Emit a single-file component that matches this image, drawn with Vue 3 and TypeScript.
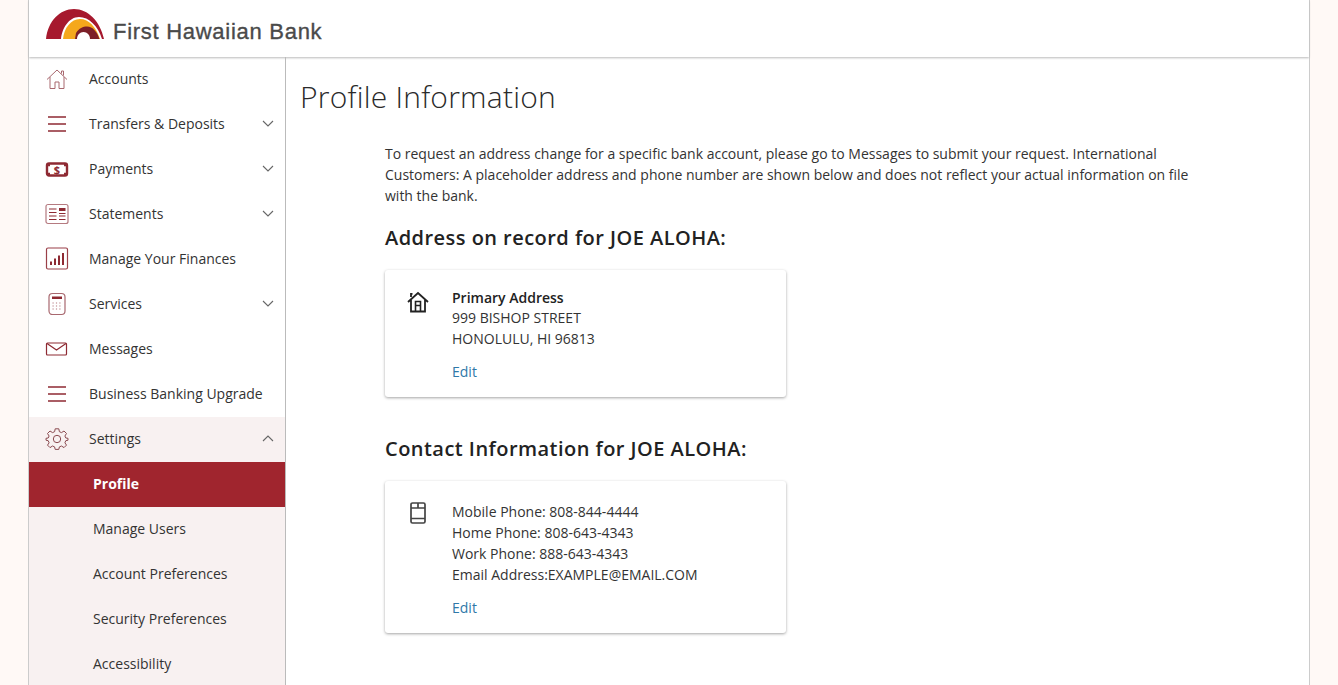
<script setup lang="ts">
interface NavItem {
  label: string
  icon: string
  chevron?: boolean
}

const navItems: NavItem[] = [
  { label: 'Accounts', icon: 'home' },
  { label: 'Transfers & Deposits', icon: 'menu', chevron: true },
  { label: 'Payments', icon: 'cash', chevron: true },
  { label: 'Statements', icon: 'news', chevron: true },
  { label: 'Manage Your Finances', icon: 'chart' },
  { label: 'Services', icon: 'calc', chevron: true },
  { label: 'Messages', icon: 'mail' },
  { label: 'Business Banking Upgrade', icon: 'menu' }
]

const subItems = ['Profile', 'Manage Users', 'Account Preferences', 'Security Preferences', 'Accessibility']
const phones = ['Mobile Phone: 808-844-4444', 'Home Phone: 808-643-4343', 'Work Phone: 888-643-4343', 'Email Address:EXAMPLE@EMAIL.COM']
</script>

<template>
  <div class="page">
    <div class="shell">
      <header class="header">
        <svg class="logo" width="60" height="31" viewBox="0 0 60 31">
          <path d="M0 30C2 12 14 0 28 0C42 0 54 12 58 30H56C52 17 43 8 33 8C23 8 16 19 15 30Z" fill="#a6192e" />
          <path d="M17 30C18 19 25 10 34 10C43 10 50 18 54 30H28V30Z" fill="#f5a81c" />
          <path d="M30 24C33 19 37 17.500 41 17.500C47 17.500 51 23 53.500 30H29Z" fill="#7c1f27" />
          <path d="M31 30C31 26 34 23 37.500 23C41 23 44 26 44 30Z" fill="#fff" />
        </svg>
        <span class="brand">First Hawaiian Bank</span>
      </header>
      <div class="body">
        <nav class="nav">
          <a v-for="item in navItems" :key="item.label" class="nav-row">
            <span class="nav-icon">
              <svg width="24" height="24" viewBox="0 0 24 24" fill="none" stroke="#8e2a33" stroke-width="1.2">
                <template v-if="item.icon === 'home'">
                  <path d="M2 12.500L12 3L22 12.500M5 10V21.500H10V15H14V21.500H19V10M16.500 6.500V4H18.500V8.500" stroke="#a8686f" stroke-width="1" />
                </template>
                <template v-else-if="item.icon === 'menu'">
                  <path d="M3 5H21M3 12H21M3 19H21" stroke-width="1.4" />
                </template>
                <template v-else-if="item.icon === 'cash'">
                  <rect x="2" y="6.500" width="20" height="12" rx="2" stroke-width="2.4" />
                  <path d="M2 8h3M19 8h3M2 17h3M19 17h3" stroke-width="2.4" />
                  <text x="12" y="16.500" font-size="11" font-weight="700" fill="#8e2a33" stroke="none" text-anchor="middle" font-family="Open Sans, sans-serif">$</text>
                </template>
                <template v-else-if="item.icon === 'news'">
                  <rect x="1" y="2.500" width="22" height="19" rx="2" stroke="#b57a80" />
                  <path d="M4 7H11.500M4 10.500H11.500M4 14H11.500M4 17.500H11.500M14 14H20.500M14 17.500H20.500M14 11.500H20.500" stroke-width="1.100" />
                  <rect x="14" y="6" width="6.500" height="3" fill="#8e2a33" stroke="none" />
                </template>
                <template v-else-if="item.icon === 'chart'">
                  <rect x="1.500" y="1" width="21" height="21" rx="1.500" stroke="#9a3f48" />
                  <path d="M6 18V14.500M10 18V11.500M14 18V8.500M18 18V6" stroke-width="2" />
                </template>
                <template v-else-if="item.icon === 'calc'">
                  <rect x="4" y="1.500" width="16" height="21" rx="3.500" stroke="#a8686f" />
                  <rect x="7" y="4.500" width="10" height="2.500" fill="#8e2a33" stroke="none" />
                  <path d="M7.500 11H16.500M7.500 14H16.500M7.500 17H16.500" stroke-width="1.200" stroke-dasharray="1.200 2.200" stroke="#b57a80" />
                </template>
                <template v-else-if="item.icon === 'mail'">
                  <rect x="1.500" y="6" width="20" height="12" rx="1" />
                  <path d="M2 6.500L11.500 13L21 6.500" />
                </template>
              </svg>
            </span>
            <span class="nav-label">{{ item.label }}</span>
            <svg v-if="item.chevron" class="chev" width="12" height="7" viewBox="0 0 12 7" fill="none" stroke="#666" stroke-width="1.100">
              <path d="M1 1L6 6L11 1" />
            </svg>
          </a>
          <div class="group">
            <a class="nav-row">
              <span class="nav-icon">
                <svg width="24" height="24" viewBox="0 0 24 24" fill="none" stroke="#8a4a50" stroke-width="1">
                  <circle cx="12" cy="12" r="3.700" />
                  <path d="M10.200 1.800H13.800L14.400 4.700L16.500 5.600L19 4L21.500 6.500L19.900 9L20.800 11L23 11.300V13.200L20.800 13.700L19.900 15.800L21.500 18.100L19 20.600L16.500 19L14.400 19.900L13.800 22.400H10.200L9.600 19.900L7.500 19L5 20.600L2.500 18.100L4.100 15.800L3.200 13.700L1 13.200V11.300L3.200 11L4.100 9L2.500 6.500L5 4L7.500 5.600L9.600 4.700Z" />
                </svg>
              </span>
              <span class="nav-label">Settings</span>
              <svg class="chev" width="12" height="7" viewBox="0 0 12 7" fill="none" stroke="#666" stroke-width="1.100">
                <path d="M1 6L6 1L11 6" />
              </svg>
            </a>
            <a v-for="(sub, i) in subItems" :key="sub" class="sub-row" :class="{ active: i === 0 }">{{ sub }}</a>
          </div>
        </nav>
        <main class="main">
          <h1 class="title">Profile Information</h1>
          <section class="content">
            <p class="intro">
              To request an address change for a specific bank account, please go to Messages to submit your request. International Customers: A placeholder address and phone number are shown below and does not reflect your actual information on file with the bank.
            </p>
            <h2 class="heading">Address on record for JOE ALOHA:</h2>
            <div class="card">
              <svg class="card-icon" width="24" height="24" viewBox="0 0 24 24" fill="none" stroke="#222" stroke-width="1.800">
                <path d="M2 12L12 3L22 12M5 9.500V21.500H19V9.500M5 7V3.800H6.500" />
                <path d="M9.500 21V11.500H14.500V21M9.500 15.500H14.500" stroke-width="1.600" />
              </svg>
              <div class="card-text address">
                <div class="strong">Primary Address</div>
                <div>999 BISHOP STREET</div>
                <div>HONOLULU, HI 96813</div>
                <a class="edit">Edit</a>
              </div>
            </div>
            <h2 class="heading second">Contact Information for JOE ALOHA:</h2>
            <div class="card contact">
              <svg class="card-icon" width="24" height="24" viewBox="0 0 24 24" fill="none" stroke="#444" stroke-width="1.700">
                <rect x="5" y="2" width="14" height="20" rx="1.500" />
                <path d="M5 7H19M5 17.500H19M12 2V7" />
              </svg>
              <div class="card-text">
                <div v-for="line in phones" :key="line">{{ line }}</div>
                <a class="edit">Edit</a>
              </div>
            </div>
          </section>
        </main>
      </div>
    </div>
  </div>
</template>

<style>
html,
body {
  margin: 0;
  height: 100%;
  overflow: hidden;
  background: #fff9f6;
}
</style>

<style scoped>
.page {
  height: 685px;
  overflow: hidden;
  background: #fff9f6;
  font-family: 'Open Sans', sans-serif;
  color: #333;
  font-size: 14px;
}

.shell {
  width: 1280px;
  height: 685px;
  margin-left: 29px;
  background: #fff;
  box-shadow: 1px 0 0 #ccc, -1px 0 0 #ccc;
  display: flex;
  flex-direction: column;
}

.header {
  height: 57px;
  flex: none;
  box-sizing: border-box;
  padding: 9px 0 0 17px;
  display: flex;
  align-items: flex-start;
  gap: 7px;
  box-shadow: 0 1px 2px #bbb;
  position: relative;
  z-index: 1;
}

.brand {
  font-family: 'Liberation Sans', sans-serif;
  font-size: 22px;
  line-height: 26px;
  margin-top: 10px;
  letter-spacing: 0.72px;
  color: #4a4a4a;
  -webkit-text-stroke: 0.35px #4a4a4a;
}

.body {
  flex: 1;
  display: flex;
  min-height: 0;
}

.nav {
  width: 256px;
  flex: none;
  border-right: 1px solid #bbb;
}

.nav-row {
  height: 45px;
  box-sizing: border-box;
  padding-bottom: 2px;
  display: flex;
  align-items: center;
  padding-left: 16px;
  padding-right: 11px;
  color: #333;
}

.nav-icon {
  width: 24px;
  height: 24px;
  margin-right: 20px;
  display: flex;
}

.nav-label {
  flex: 1;
}

.chev {
  flex: none;
}

.group {
  background: #f8f1f1;
  height: 268px;
}

.sub-row {
  display: block;
  height: 45px;
  line-height: 43px;
  padding-left: 64px;
  color: #333;
}

.sub-row.active {
  background: #a0252e;
  color: #fff;
  font-weight: 700;
}

.main {
  flex: 1;
  padding-left: 14px;
  min-width: 0;
}

.title {
  margin: 21px 0 0;
  font-size: 30px;
  font-weight: 300;
  line-height: 38px;
  letter-spacing: 0.22px;
  color: #2a2a2a;
}

.content {
  margin-left: 85px;
  width: 810px;
}

.intro {
  margin: 27px 0 0;
  line-height: 21px;
  color: #333;
}

.heading {
  margin: 18px 0 0;
  font-size: 20px;
  line-height: 28px;
  font-weight: 600;
  letter-spacing: 0.46px;
  color: #222;
}

.heading.second {
  margin-top: 38px;
}

.card {
  width: 401px;
  height: 127px;
  margin-top: 18px;
  box-sizing: border-box;
  border-radius: 3px;
  box-shadow: 0 1px 3px #a5a5a5;
  display: flex;
  padding-top: 20px;
  padding-left: 21px;
}

.card.contact {
  height: 152px;
}

.card-icon {
  flex: none;
  margin-right: 22px;
}

.card-text {
  line-height: 21px;
  color: #333;
}

.card-text.address {
  margin-top: -2px;
}

.strong {
  font-weight: 600;
  color: #222;
  line-height: 19px;
}

.edit {
  display: block;
  margin-top: 12px;
  color: #2f78a8;
}
</style>
